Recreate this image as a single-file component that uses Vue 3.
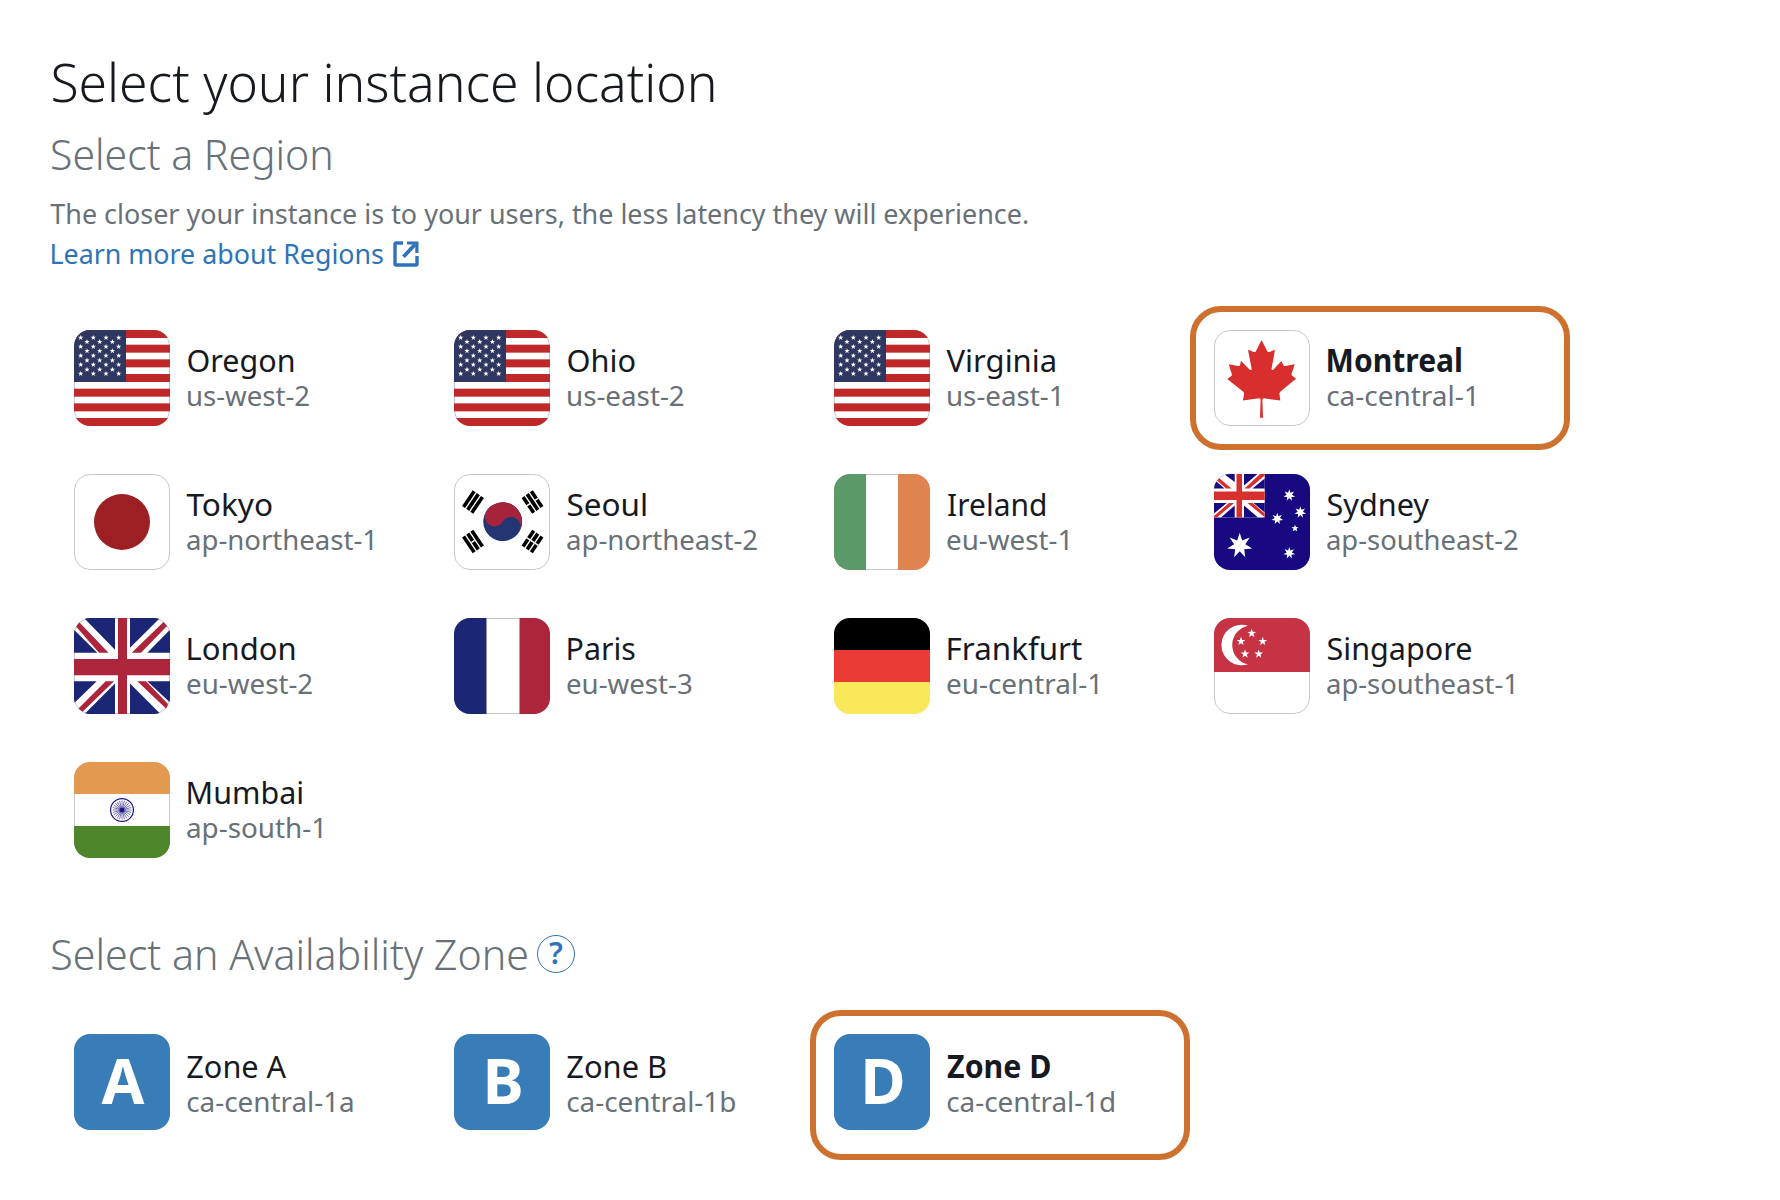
<script setup>
const regions = [
  { name: 'Oregon', code: 'us-west-2', flag: 'us', n: [17.5, 123.2], c: [18, 139.3] },
  { name: 'Ohio', code: 'us-east-2', flag: 'us', n: [17.5, 85], c: [18, 134] },
  { name: 'Virginia', code: 'us-east-1', flag: 'us', n: [16.5, 125.5], c: [18, 128.8] },
  { name: 'Montreal', code: 'ca-central-1', flag: 'ca', n: [17.5, 151.7], c: [17.2, 163.8], selected: true },
  { name: 'Tokyo', code: 'ap-northeast-1', flag: 'jp', n: [16.5, 102], c: [17, 202.3] },
  { name: 'Seoul', code: 'ap-northeast-2', flag: 'kr', n: [17.5, 96], c: [17, 207.3] },
  { name: 'Ireland', code: 'eu-west-1', flag: 'ie', n: [18, 115.2], c: [17, 137.5] },
  { name: 'Sydney', code: 'ap-southeast-2', flag: 'au', n: [17.5, 119.8], c: [17, 208] },
  { name: 'London', code: 'eu-west-2', flag: 'gb', n: [18.5, 124.2], c: [17, 142.5] },
  { name: 'Paris', code: 'eu-west-3', flag: 'fr', n: [18.5, 84.8], c: [17, 142] },
  { name: 'Frankfurt', code: 'eu-central-1', flag: 'de', n: [18.5, 152], c: [17, 167.3] },
  { name: 'Singapore', code: 'ap-southeast-1', flag: 'sg', n: [17.5, 161.8], c: [17, 203.3] },
  { name: 'Mumbai', code: 'ap-south-1', flag: 'in', n: [18.5, 132], c: [17, 151.3] },
].map((r) => ({ ...r, n: r.n.map((v) => v - 17), c: r.c.map((v) => v - 17) }))

const zones = [
  { name: 'Zone A', code: 'ca-central-1a', letter: 'A', n: [0.3, 100], c: [0.2, 166.3] },
  { name: 'Zone B', code: 'ca-central-1b', letter: 'B', n: [0.3, 98.7], c: [0.2, 168.5] },
  { name: 'Zone D', code: 'ca-central-1d', letter: 'D', n: [0.1, 103.3], c: [0.2, 167.3], selected: true },
]

const starPath = (cx, cy, r, points = 5, inner = 0.4) => {
  const out = []
  for (let i = 0; i < points * 2; i++) {
    const a = (Math.PI * i) / points - Math.PI / 2
    const k = i % 2 ? r * inner : r
    out.push(`${(cx + k * Math.cos(a)).toFixed(2)} ${(cy + k * Math.sin(a)).toFixed(2)}`)
  }
  return 'M' + out.join('L') + 'Z'
}

const usStars = []
for (const y of [7.7, 16.7, 25.7, 34.7, 43.7]) for (const x of [6.7, 19.3, 32, 44.7]) usStars.push(starPath(x, y, 2.8))
for (const y of [11.8, 21, 30.4, 39.6]) for (const x of [13, 25.7, 38.4]) usStars.push(starPath(x, y, 2.8))
const usStarPath = usStars.join('')

const auStarPath = [
  starPath(25.7, 71.6, 12.8, 7, 0.45),
  starPath(75.3, 21.3, 6, 7, 0.45),
  starPath(86.3, 38.3, 6, 7, 0.45),
  starPath(63.3, 44.7, 6, 7, 0.45),
  starPath(75.3, 79, 6, 7, 0.45),
  starPath(81, 54.3, 3.6, 5, 0.45),
].join('')

const sgStarPath = [[37.7, 15.3], [27, 23.4], [48.7, 23.4], [31, 36], [44.7, 36]]
  .map(([x, y]) => starPath(x, y, 4.6))
  .join('')

const trigrams = [
  { x: 19, y: 28, a: -56, broken: [] },
  { x: 78.5, y: 28, a: 56, broken: [0, 2] },
  { x: 19, y: 67.5, a: 56, broken: [1] },
  { x: 78.5, y: 67.5, a: -56, broken: [0, 1, 2] },
]

// Fits a line of text between two horizontal ink edges of its box.
const fit = (el, { value }) => {
  const style = getComputedStyle(el)
  const ctx = document.createElement('canvas').getContext('2d')
  ctx.font = `${style.fontWeight} ${style.fontSize} ${style.fontFamily}`
  const m = ctx.measureText(el.textContent)
  const scale = (value[1] - value[0]) / (m.actualBoundingBoxRight + m.actualBoundingBoxLeft)
  const shift = value[0] + m.actualBoundingBoxLeft * scale
  el.style.transform = `translateX(${shift.toFixed(2)}px) scaleX(${scale.toFixed(4)})`
}
const vFit = { mounted: fit }
</script>

<template>
  <main class="page">
    <h1><span v-fit="[2.3, 663.5]" class="line">Select your instance location</span></h1>
    <h2><span v-fit="[2, 280.5]" class="line">Select a Region</span></h2>
    <p class="hint"><span v-fit="[0.3, 978]" class="line">The closer your instance is to your users, the less latency they will experience.</span></p>
    <a class="learn">
      <span class="learn-text"><span v-fit="[1.5, 333]" class="line">Learn more about Regions</span></span>
      <svg class="ext" viewBox="0 0 26 26" width="26" height="26">
        <path d="M10 2H3.2Q2 2 2 3.2V22.8Q2 24 3.2 24H22.8Q24 24 24 22.8V15" fill="none" stroke="#2e73b8" stroke-width="3.4" />
        <path d="M10.5 15.8L22 3.5" fill="none" stroke="#2e73b8" stroke-width="3.8" />
        <path d="M14 .4H25.5V12H22.300V3.6H14Z" fill="#2e73b8" />
      </svg>
    </a>

    <section class="grid regions">
      <div v-for="r in regions" :key="r.code" class="card" :class="{ selected: r.selected }">
        <svg class="tile" viewBox="0 0 96 96" width="96" height="96">
          <defs>
            <clipPath :id="'clip-' + r.code"><rect width="96" height="96" rx="16" /></clipPath>
          </defs>
          <rect x=".5" y=".5" width="95" height="95" rx="15.5" fill="#fff" stroke="#c8c8c8" />
          <g :clip-path="`url(#clip-${r.code})`">
            <template v-if="r.flag === 'us'">
              <rect v-for="i in 7" :key="i" x="0" :y="(i - 1) * 14.67" width="96" height="8" fill="#be2829" />
              <rect width="52" height="52" fill="#2e375f" />
              <path :d="usStarPath" fill="#fff" />
            </template>
            <path
              v-else-if="r.flag === 'ca'"
              fill="#d82e2e"
              d="M47.5 10L53.3 21.2Q54.3 22.6 56 21.8L61 19.7L57.6 38.5Q57.5 41 59.5 39.5L67.3 31L69.5 35.2Q70 36.4 71.5 36L80.7 34.2L77.6 43.8Q77.4 45.5 79 46.2L82 48.7L66.5 61.5Q65 63 65.5 64.5L66.3 70.6L50 68.3Q48.3 68.2 48.4 70L49 87.7H46L46.6 70Q46.7 68.2 45 68.3L28.9 70.6L30 64.5Q30.5 63 29 61.5L13.3 49L17 46.2Q18.5 45.3 17.7 43.8L14.7 34.2L24 36Q25.5 36.3 26 35.2L27 30.7L35.5 39.5Q37.8 41 37.6 38.5L34 19.7L39.2 21.8Q41 22.6 41.9 21.2Z"
            />
            <circle v-else-if="r.flag === 'jp'" cx="48" cy="48" r="28" fill="#9c1f23" />
            <template v-else-if="r.flag === 'kr'">
              <g transform="translate(48.7 47.7) rotate(31)">
                <circle r="19.4" fill="#243574" />
                <path d="M-19.4 0A19.4 19.4 0 0 1 19.4 0A9.7 9.7 0 0 0 0 0A9.7 9.7 0 0 1 -19.4 0Z" fill="#a5233b" />
              </g>
              <g v-for="t in trigrams" :key="t.x + '-' + t.y" :transform="`translate(${t.x} ${t.y}) rotate(${t.a})`">
                <template v-for="i in 3" :key="i">
                  <rect x="-9.5" :y="(i - 2) * 5 - 1.8" width="19" height="3.6" />
                  <rect v-if="t.broken.includes(i - 1)" x="-.7" :y="(i - 2) * 5 - 2" width="1.4" height="4" fill="#fff" />
                </template>
              </g>
            </template>
            <template v-else-if="r.flag === 'ie'">
              <rect width="32" height="96" fill="#5b9a68" />
              <rect x="64" width="32" height="96" fill="#df8350" />
            </template>
            <template v-else-if="r.flag === 'fr'">
              <rect width="32.5" height="96" fill="#1b2674" />
              <rect x="65.5" width="30.5" height="96" fill="#ac253a" />
            </template>
            <template v-else-if="r.flag === 'de'">
              <rect width="96" height="32" fill="#000" />
              <rect y="32" width="96" height="32" fill="#e93a33" />
              <rect y="64" width="96" height="32" fill="#fae85b" />
            </template>
            <template v-else-if="r.flag === 'sg'">
              <rect width="96" height="54" fill="#c63345" />
              <path d="M34 7.7A20.3 20.3 0 1 0 34 46.3A19.7 19.7 0 0 1 34 7.7Z" fill="#fff" />
              <path :d="sgStarPath" fill="#fff" />
            </template>
            <template v-else-if="r.flag === 'in'">
              <rect width="96" height="32" fill="#e3994f" />
              <rect y="64" width="96" height="32" fill="#50862b" />
              <circle cx="48" cy="48" r="11.4" fill="none" stroke="#1a1580" stroke-width="1.2" />
              <path
                v-for="i in 24"
                :key="i"
                d="M48 48V38.5"
                :transform="`rotate(${i * 15} 48 48)`"
                stroke="#1a1580"
                stroke-width=".55"
              />
              <circle cx="48" cy="48" r="2.3" fill="#1a1580" />
            </template>
            <template v-else-if="r.flag === 'au'">
              <rect width="96" height="96" fill="#170a80" />
              <rect width="50.7" height="43.5" fill="#fff" />
              <path
                fill="#170a80"
                d="M10 0H20.7V8ZM0 5.5V14.5H10.5ZM30 0H43.5L30 11.5ZM50.7 4.5V14.5H38.5ZM0 29H12.7L0 39.5ZM20.7 31.5V43.5H7ZM39.5 29H50.7V38.5ZM30 31.5V43.5H44Z"
              />
              <path
                fill="#d8302f"
                d="M4.5 3.5L17.5 14.5H12L2.5 6ZM46 0H50.7V1.5L35.5 14.5H30.5ZM15 29H20L3 43.5H0V42ZM33.5 29H38.7L50.7 39.5V43.3ZM22.5 0H28V43.5H22.5ZM0 17.5H50.7V26H0Z"
              />
              <path :d="auStarPath" fill="#fff" />
            </template>
            <template v-else-if="r.flag === 'gb'">
              <path
                fill="#1b2674"
                d="M10 0H41V31.7ZM0 11.7V34.7H23.3ZM56 0H86L56 29.7ZM96 11.7V34.7H73.3ZM0 63.3H22.7L0 85.3ZM41 65.5V96H10.5ZM73.3 63.3H96V84.5ZM56 65.5V96H86.5Z"
              />
              <path
                fill="#ac253a"
                d="M5.3 4.3L34.5 34.7H25L2 8.5ZM89.5 4L93 8L67 34.7H57.7ZM31.7 63.3H40L8.5 93.7L4.5 90.5ZM63.3 63.3H72L94 86L92.5 91ZM44 0H53V96H44ZM0 41H96V57.3H0Z"
              />
            </template>
          </g>
        </svg>
        <div class="label">
          <strong><span v-fit="r.n" class="line">{{ r.name }}</span></strong>
          <small><span v-fit="r.c" class="line">{{ r.code }}</span></small>
        </div>
      </div>
    </section>

    <div class="zone-head">
      <h2><span v-fit="[2.3, 477.5]" class="line">Select an Availability Zone</span></h2>
      <span class="help">?</span>
    </div>

    <section class="grid zones">
      <div v-for="z in zones" :key="z.code" class="card" :class="{ selected: z.selected }">
        <div class="tile letter">{{ z.letter }}</div>
        <div class="label">
          <strong><span v-fit="z.n" class="line">{{ z.name }}</span></strong>
          <small><span v-fit="z.c" class="line">{{ z.code }}</span></small>
        </div>
      </div>
    </section>
  </main>
</template>

<style>
body {
  margin: 0;
  background: #fff;
}
</style>

<style scoped>
.page {
  box-sizing: border-box;
  width: 1780px;
  height: 1200px;
  padding: 50px 50px 0;
  overflow: hidden;
  background: #fff;
  color: #16191f;
  font-family: "Noto Sans", "Open Sans", sans-serif;
}
.line {
  display: block;
  width: max-content;
  white-space: nowrap;
  transform-origin: 0 50%;
}
h1,
h2,
p {
  margin: 0;
}
h1 {
  height: 80px;
  font-size: 54px;
  line-height: 62px;
  font-weight: 300;
}
h2 {
  height: 60px;
  font-size: 42.5px;
  line-height: 48px;
  font-weight: 300;
  color: #687078;
}
.hint {
  height: 40px;
  margin-top: 4px;
  font-size: 27px;
  line-height: 40px;
  color: #687078;
}
.learn {
  display: flex;
  align-items: center;
  height: 40px;
  font-size: 27px;
  line-height: 40px;
  color: #2e73b8;
}
.learn-text {
  width: 343px;
}
.ext {
  display: block;
}
.grid {
  display: grid;
  grid-template-columns: repeat(4, 380px);
}
.regions {
  grid-auto-rows: 144px;
  margin-top: 32px;
}
.zones {
  grid-auto-rows: 150px;
}
.card {
  box-sizing: border-box;
  display: flex;
  padding: 18px;
  border: 6px solid transparent;
  border-radius: 31px;
}
.card.selected {
  border-color: #ce712e;
}
.tile {
  display: block;
  flex: none;
  box-sizing: border-box;
  width: 96px;
  height: 96px;
}
.letter {
  padding-left: 2px;
  border-radius: 16px;
  background: #387cb8;
  color: #fff;
  font: 700 62px/92px "Noto Sans", sans-serif;
  text-align: center;
}
.label {
  display: flex;
  flex-direction: column;
  padding: 11px 0 0 17px;
}
.zones .label {
  padding-top: 13px;
}
strong {
  height: 38px;
  font-size: 31.5px;
  line-height: 38px;
  font-weight: 400;
}
.selected strong {
  font-weight: 700;
}
small {
  height: 34px;
  font-size: 27.5px;
  line-height: 34px;
  color: #687078;
}
.zone-head {
  display: flex;
  height: 80px;
  margin-top: 48px;
}
.zone-head h2 {
  width: 487px;
}
.help {
  box-sizing: border-box;
  width: 38px;
  height: 38px;
  margin-top: 5px;
  border: 1.5px solid #2e73b8;
  border-radius: 50%;
  color: #2e73b8;
  font-size: 30px;
  line-height: 34px;
  font-weight: 600;
  text-align: center;
}
</style>
